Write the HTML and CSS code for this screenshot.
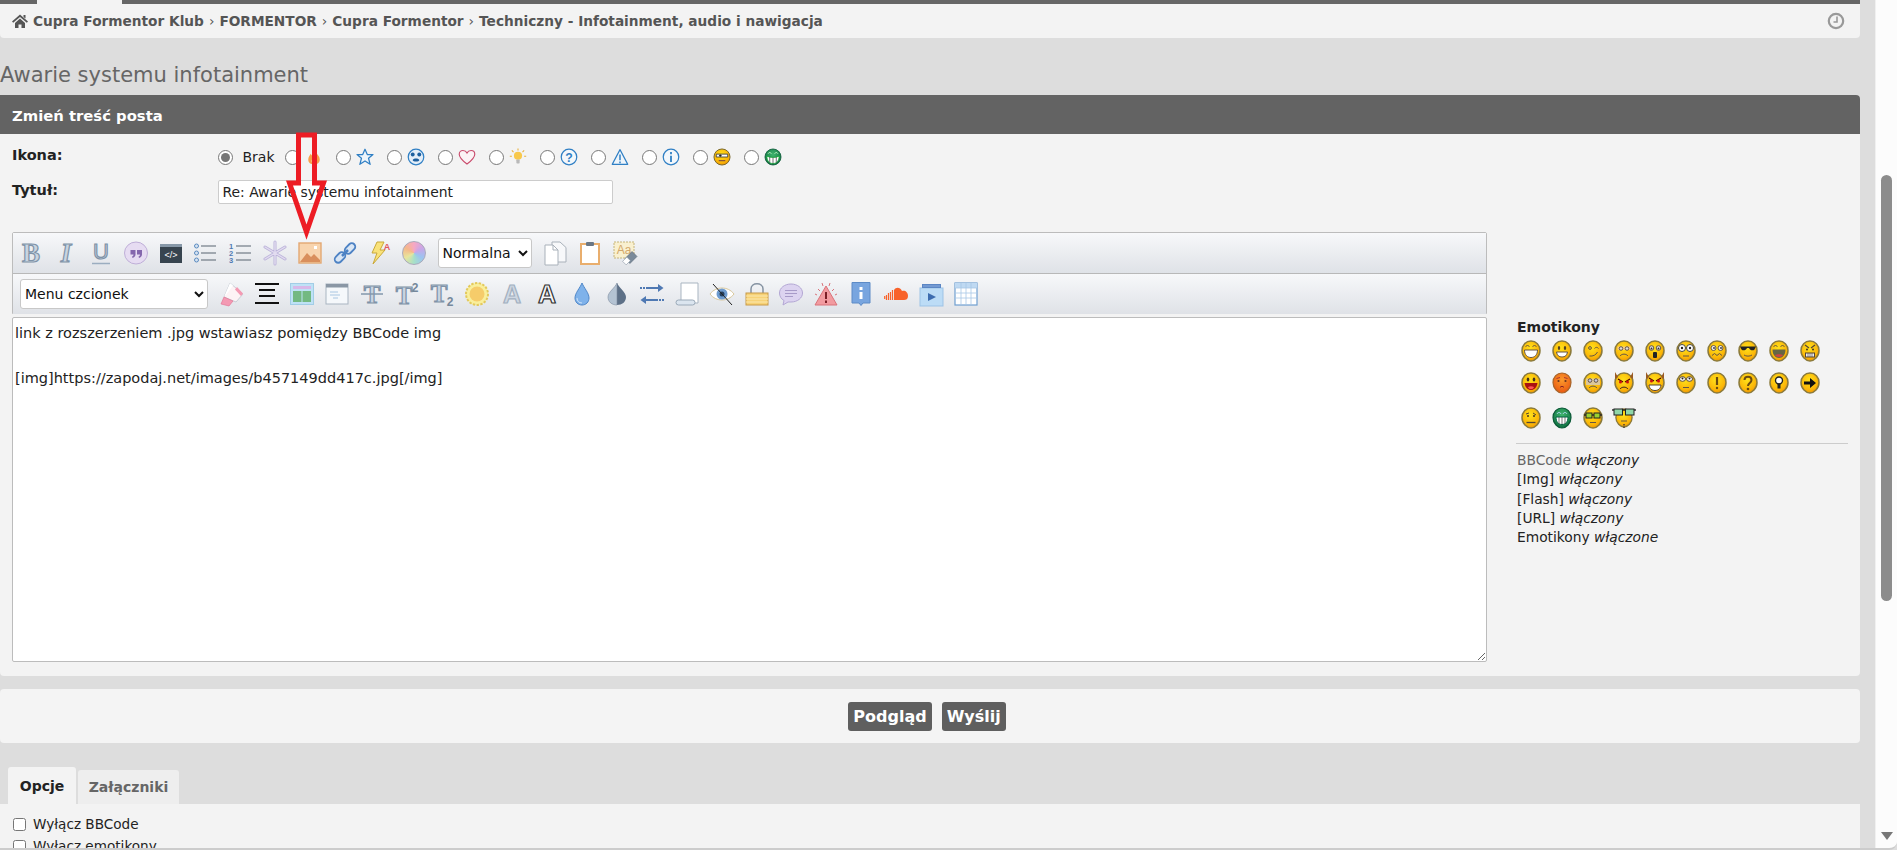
FILE: index.html
```html
<!DOCTYPE html>
<html lang="pl">
<head>
  <meta charset="UTF-8" />
  <title>Awarie systemu infotainment</title>
  <link rel="stylesheet" href="styles.css">
</head>
<body>
  <!-- shared gradients and smiley head -->
  <svg class="sprite" aria-hidden="true">
    <defs>
      <radialGradient id="gold" cx="45%" cy="35%" r="70%"><stop offset="0" stop-color="#ffe11a"/><stop offset="0.7" stop-color="#fbb507"/><stop offset="1" stop-color="#e98c05"/></radialGradient>
      <radialGradient id="red" cx="50%" cy="35%" r="70%"><stop offset="0" stop-color="#fb9a2c"/><stop offset="1" stop-color="#e8530f"/></radialGradient>
      <radialGradient id="green" cx="50%" cy="35%" r="70%"><stop offset="0" stop-color="#3fb56e"/><stop offset="1" stop-color="#0b6b3c"/></radialGradient>
      <symbol id="head" viewBox="0 0 20 22"><path d="M10 1C15 1 19 5 19 10.5C19 16.5 14 21 10 21C6 21 1 16.5 1 10.5C1 5 5 1 10 1Z" fill="url(#gold)" stroke="#8a7a3c" stroke-width="1.5"/></symbol>
      <symbol id="head-red" viewBox="0 0 20 22"><path d="M10 1C15 1 19 5 19 10.5C19 16.5 14 21 10 21C6 21 1 16.5 1 10.5C1 5 5 1 10 1Z" fill="url(#red)" stroke="#a8662c" stroke-width="1.2"/></symbol>
      <symbol id="head-green" viewBox="0 0 20 22"><path d="M10 1C15 1 19 5 19 10.5C19 16.5 14 21 10 21C6 21 1 16.5 1 10.5C1 5 5 1 10 1Z" fill="url(#green)" stroke="#0c5a38" stroke-width="1.2"/></symbol>
    </defs>
  </svg>

  <div class="page">
    <div class="content">
      <div class="topbar"><span class="topbar-tab"></span></div>

      <nav class="crumbs">
        <svg class="crumb-home" viewBox="0 0 16 14"><path d="M8 0.5L16 7.5L14.8 8.8L8 3L1.2 8.8L0 7.5Z M3 9L8 4.600L13 9V14H9.5V10.5H6.5V14H3Z M11.5 1H13.5V4.5L11.5 3Z" fill="#555"/></svg>
        <span>Cupra Formentor Klub</span><i>›</i><span>FORMENTOR</span><i>›</i><span>Cupra Formentor</span><i>›</i><span>Techniczny - Infotainment, audio i nawigacja</span>
        <svg class="crumb-clock" viewBox="0 0 18 18"><circle cx="9" cy="9" r="7.2" fill="none" stroke="#999" stroke-width="2.2"/><path d="M10 4.5V10H6.5" fill="none" stroke="#999" stroke-width="1.6"/></svg>
      </nav>

      <h1 class="thread-title">Awarie systemu infotainment</h1>

      <section class="panel">
        <h2 class="panel-head">Zmień treść posta</h2>

        <div class="row row-icons">
          <label class="row-label">Ikona:</label>
          <div class="post-icons">
            <label class="post-none"><input type="radio" name="ikona" checked /> <span>Brak</span></label>
            <label class="post-icon"><input type="radio" name="ikona" />
              <svg viewBox="0 0 22 22"><path d="M11 2C12 6 18 8 18 14C18 18 15 20 11 20C7 20 4 18 4 14C4 11 6 9 7 7C8 9 9 10 10 10C11 7 10 4 11 2Z" fill="#f6a04a"/><path d="M11 10C12 13 14 14 14 16C14 18 12.5 19 11 19C9.5 19 8 18 8 16C8 14 10 13 11 10Z" fill="#fde3b0"/></svg></label>
            <label class="post-icon"><input type="radio" name="ikona" />
              <svg viewBox="0 0 22 22"><path d="M11 1.5L13.8 8H20.8L15.3 12.5L17.3 20L11 15.8L4.7 20L6.7 12.5L1.2 8H8.2Z" fill="#eef5fb" stroke="#2f7fc4" stroke-width="1.5" stroke-linejoin="round"/></svg></label>
            <label class="post-icon"><input type="radio" name="ikona" />
              <svg viewBox="0 0 22 22"><circle cx="11" cy="11" r="9.5" fill="#e4eef8" stroke="#2f7fc4" stroke-width="1.5"/><circle cx="7" cy="8" r="2.4" fill="#1d5f9e"/><circle cx="15" cy="8" r="2.4" fill="#1d5f9e"/><path d="M7 15C7 12 15 12 15 15C15 17 7 17 7 15Z" fill="#1d5f9e"/></svg></label>
            <label class="post-icon"><input type="radio" name="ikona" />
              <svg viewBox="0 0 22 22"><path d="M11 19.5C5 15 1.5 11.5 1.5 7.5C1.5 4.5 3.8 3 6 3C8 3 10 4 11 6C12 4 14 3 16 3C18.2 3 20.5 4.5 20.5 7.5C20.5 11.5 17 15 11 19.5Z" fill="#fbf3f5" stroke="#c94b6c" stroke-width="1.4"/></svg></label>
            <label class="post-icon"><input type="radio" name="ikona" />
              <svg viewBox="0 0 22 22"><circle cx="11" cy="9.5" r="5" fill="#f8c84a"/><rect x="9" y="14" width="4" height="5" rx="1" fill="#b9b9b9"/><path d="M11 0.5V3M3.5 3L5.5 5M18.5 3L16.5 5M1 10H3.5M18.5 10H21" stroke="#e8b13a" stroke-width="1.3"/></svg></label>
            <label class="post-icon"><input type="radio" name="ikona" />
              <svg viewBox="0 0 22 22"><circle cx="11" cy="11" r="9.5" fill="#f3f7fb" stroke="#2f7fc4" stroke-width="1.5"/><text x="11" y="16.5" class="svg-q">?</text></svg></label>
            <label class="post-icon"><input type="radio" name="ikona" />
              <svg viewBox="0 0 22 22"><path d="M11 2L20.5 20H1.5Z" fill="#eef5fb" stroke="#2f7fc4" stroke-width="1.4" stroke-linejoin="round"/><path d="M11 8V15M11 16.5V18.5" stroke="#2f7fc4" stroke-width="1.8"/></svg></label>
            <label class="post-icon"><input type="radio" name="ikona" />
              <svg viewBox="0 0 22 22"><circle cx="11" cy="11" r="9.5" fill="#f3f7fb" stroke="#2f7fc4" stroke-width="1.5"/><path d="M11 5V7.5M11 9.5V17" stroke="#2f7fc4" stroke-width="2.2"/></svg></label>
            <label class="post-icon"><input type="radio" name="ikona" />
              <svg viewBox="0 0 22 22"><circle cx="11" cy="11" r="9.8" fill="url(#gold)" stroke="#77662c" stroke-width="1.2"/><path d="M4 7.5H18V11H4Z" fill="#fff" stroke="#333"/><circle cx="9" cy="9.3" r="1.5" fill="#222"/><path d="M7 15.5H15" stroke="#744" stroke-width="1.3"/></svg></label>
            <label class="post-icon"><input type="radio" name="ikona" />
              <svg viewBox="0 0 22 22"><circle cx="11" cy="11" r="9.8" fill="url(#green)" stroke="#0c5a38"/><path d="M3.5 10C8 12 14 12 18.5 10C18.5 16 15 19 11 19C7 19 3.5 16 3.5 10Z" fill="#fff" stroke="#1a3"/><path d="M7 11V18M11 11.5V19M15 11V18" stroke="#555"/><path d="M5 7C6 5 8 5 9 7M13 7C14 5 16 5 17 7" fill="none" stroke="#cfc"/></svg></label>
          </div>
        </div>

        <div class="row row-title">
          <label class="row-label" for="tytul">Tytuł:</label>
          <input type="text" id="tytul" class="title-input" value="Re: Awarie systemu infotainment" />
        </div>

        <div class="edit-area">
          <div class="editor">
            <div class="toolbar">
              <div class="tool-row tool-row-1">
                <span class="tool"><svg viewBox="0 0 24 24"><text x="12" y="21" class="lt">B</text></svg></span>
                <span class="tool"><svg viewBox="0 0 24 24"><text x="12" y="21" class="lt lt-i">I</text></svg></span>
                <span class="tool"><svg viewBox="0 0 24 24"><text x="12" y="18" class="lt lt-u">U</text><path d="M3 22.5H21" stroke="#9badc0" stroke-width="1.5"/></svg></span>
                <span class="tool"><svg viewBox="0 0 24 24"><ellipse cx="12" cy="12" rx="11.5" ry="11" fill="#e6dcf2" stroke="#bfafd8"/><path d="M6.5 9H11.5V13.5C11.5 15.5 10 16.5 8.5 17L8 15.5C9 15.2 9.5 14.5 9.5 13.5H6.5Z M13 9H18V13.5C18 15.5 16.5 16.5 15 17L14.5 15.5C15.5 15.2 16 14.5 16 13.5H13Z" fill="#8467ad"/></svg></span>
                <span class="tool"><svg viewBox="0 0 24 24"><rect x="1" y="3" width="22" height="19" fill="#37444f"/><rect x="1" y="3" width="22" height="3" fill="#8798a8"/><text x="12" y="17" class="svg-code">&lt;/&gt;</text></svg></span>
                <span class="tool"><svg viewBox="0 0 24 24"><circle cx="3.5" cy="5" r="2" fill="#d5e2f0" stroke="#5b8bc0"/><circle cx="3.5" cy="12" r="2" fill="#d5e2f0" stroke="#5b8bc0"/><circle cx="3.5" cy="19" r="2" fill="#d5e2f0" stroke="#5b8bc0"/><path d="M8 5H23M8 12H23M8 19H23" stroke="#596470" stroke-width="1.2"/></svg></span>
                <span class="tool"><svg viewBox="0 0 24 24"><text x="3" y="8" class="svg-num">1</text><text x="3" y="15" class="svg-num">2</text><text x="3" y="22" class="svg-num">3</text><path d="M8 5H23M8 12H23M8 19H23" stroke="#596470" stroke-width="1.2"/></svg></span>
                <span class="tool"><svg viewBox="0 0 24 24"><path d="M12 1V23M2 6L22 18M2 18L22 6" stroke="#bcb4da" stroke-width="3" stroke-linecap="round"/><path d="M12 1V23M2 6L22 18M2 18L22 6" stroke="#e2dcf0" stroke-width="1.4" stroke-linecap="round"/></svg></span>
                <span class="tool"><svg viewBox="0 0 24 24"><rect x="1" y="2" width="22" height="20" fill="#f8d4ae" stroke="#e3a873" stroke-width="1.4"/><path d="M2 21L9 12L13 16L16 13L22 19V21Z" fill="#d98f5d"/><rect x="16" y="5" width="3" height="3" fill="#fff"/></svg></span>
                <span class="tool"><svg viewBox="0 0 24 24"><g fill="#d9e6f5" stroke="#4d82c4" stroke-width="1.8"><rect x="1" y="13" width="12" height="7" rx="3.5" transform="rotate(-45 7 16.5)"/><rect x="11" y="4" width="12" height="7" rx="3.5" transform="rotate(-45 17 7.5)"/></g><path d="M9 15L15 9" stroke="#4d82c4" stroke-width="2.5"/></svg></span>
                <span class="tool"><svg viewBox="0 0 24 24"><path d="M10 1H17L13 9H18L6 23L10 12H5Z" fill="#f9e27a" stroke="#c9a83a"/><text x="20" y="9" class="svg-a">A</text></svg></span>
                <span class="tool"><span class="wheel"></span></span>
                <select class="tool-select sel-size"><option>Normalna</option></select>
                <span class="tool"><svg viewBox="0 0 24 24"><path d="M9 1H17L23 6.5V21H9Z" fill="#f7f8fa" stroke="#a9b1ba"/><path d="M2 4H10L15 9V24H2Z" fill="#fff" stroke="#a9b1ba"/><path d="M10 4V9H15" fill="none" stroke="#a9b1ba"/></svg></span>
                <span class="tool"><svg viewBox="0 0 24 24"><rect x="3" y="3" width="18" height="20" fill="#fff" stroke="#e9ae6d" stroke-width="2"/><rect x="8" y="1" width="8" height="4" rx="1" fill="#6a7785"/></svg></span>
                <span class="tool"><svg viewBox="0 0 24 24"><rect x="1" y="1" width="20" height="16" fill="#f9f0cf" stroke="#c5b47a" stroke-dasharray="2 1"/><text x="11" y="13" class="svg-aa">Aa</text><rect x="13" y="13" width="10" height="7" transform="rotate(-45 18 16.5)" fill="#7a8a9a" stroke="#5d6c7a" stroke-width="0.6"/><rect x="11" y="17" width="5" height="6" transform="rotate(45 13.5 20)" fill="#fff" stroke="#8a97a5" stroke-width="0.6"/></svg></span>
              </div>
              <div class="tool-row tool-row-2">
                <select class="tool-select sel-font"><option>Menu czcionek</option></select>
                <span class="tool"><svg viewBox="0 0 24 24"><path d="M10 1L23 12L16 20L4 15Z" fill="#fdf3f5" stroke="#c8ced6"/><path d="M10 1L13 3.5L6 13L4 15Z" fill="#fff"/><path d="M1 22L4 15L13 19L9 24Z" fill="#f49ab3" stroke="#e06d8e" stroke-width="0.6"/><path d="M17 5L23 11.5L21 14L15 7.5Z" fill="#f49ab3"/></svg></span>
                <span class="tool"><svg viewBox="0 0 24 24"><path d="M0 2H24M4 8H20M4 14H20M0 21H24" stroke="#111" stroke-width="2.2"/></svg></span>
                <span class="tool"><svg viewBox="0 0 24 24"><rect x="0.5" y="1.5" width="23" height="21" fill="#bfe2f6" stroke="#a2cde6"/><rect x="3" y="4" width="18" height="3" fill="#d8b8e8"/><rect x="3" y="9" width="8.5" height="11" fill="#73b982"/><rect x="12.5" y="9" width="8.5" height="11" fill="#73b982"/></svg></span>
                <span class="tool"><svg viewBox="0 0 24 24"><rect x="1" y="2" width="22" height="20" fill="#f5f8fb" stroke="#a9b5c1"/><rect x="1" y="2" width="22" height="3.5" fill="#8a97a5"/><path d="M5 10H13M5 13H15M8 16H13" stroke="#a8c6e2"/></svg></span>
                <span class="tool"><svg viewBox="0 0 24 24"><text x="12" y="21" class="lt lt-t">T</text><path d="M1 12H23" stroke="#8397ab" stroke-width="1.5"/></svg></span>
                <span class="tool"><svg viewBox="0 0 24 24"><text x="9" y="22" class="lt lt-t">T</text><text x="20" y="10" class="svg-sup">2</text></svg></span>
                <span class="tool"><svg viewBox="0 0 24 24"><text x="9" y="20" class="lt lt-t">T</text><text x="20" y="24" class="svg-sup">2</text></svg></span>
                <span class="tool"><svg viewBox="0 0 24 24"><circle cx="12" cy="12" r="11" fill="#f9ef9c" stroke="#e3c95c" stroke-dasharray="2.4 1.4" stroke-width="2"/><circle cx="12" cy="12" r="7.5" fill="#f6cc6a"/></svg></span>
                <span class="tool"><svg viewBox="0 0 24 24"><text x="12" y="21" class="lt lt-a">A</text></svg></span>
                <span class="tool"><svg viewBox="0 0 24 24"><text x="12" y="21" class="lt lt-b">A</text></svg></span>
                <span class="tool"><svg viewBox="0 0 24 24"><path d="M12 1C14 6 19 11 19 16C19 20 16 23 12 23C8 23 5 20 5 16C5 11 10 6 12 1Z" fill="#7fb2ea" stroke="#4e86c8"/><path d="M7 16C7 19 9 21 12 21" stroke="#cfe3f8" fill="none"/></svg></span>
                <span class="tool"><svg viewBox="0 0 24 24"><path d="M12 1C14 6 21 10 21 15C21 20 17 23 12 23Z" fill="#5d7087"/><path d="M12 1C10 6 3 10 3 15C3 20 7 23 12 23Z" fill="#b4c3d3" stroke="#7c8c9d" stroke-width="0.6"/></svg></span>
                <span class="tool"><svg viewBox="0 0 24 24"><path d="M0 6H2M3 6H5M6 6H19" stroke="#4f79b3" stroke-width="2" /><path d="M18 2L23.5 6L18 10Z" fill="#4f79b3"/><path d="M24 18H22M21 18H19M18 18H5" stroke="#4f79b3" stroke-width="2"/><path d="M6 14L0.5 18L6 22Z" fill="#4f79b3"/></svg></span>
                <span class="tool"><svg viewBox="0 0 24 24"><path d="M6 1H23V21H6Z" fill="#fff" stroke="#a9b5c1"/><rect x="1" y="18" width="19" height="5" rx="2.5" fill="#dbe5ef" stroke="#9aa9b8"/></svg></span>
                <span class="tool"><svg viewBox="0 0 24 24"><path d="M0 12C6 4 18 4 24 12C18 20 6 20 0 12Z" fill="#fff" stroke="#d9c79a"/><circle cx="12" cy="12" r="5.5" fill="#6f9ccf"/><circle cx="12" cy="12" r="2.5" fill="#26405f"/><path d="M3 2L22 23" stroke="#222"/></svg></span>
                <span class="tool"><svg viewBox="0 0 24 24"><path d="M6 12V7C6 0 18 0 18 7V12" fill="none" stroke="#8592a1" stroke-width="1.5"/><rect x="1" y="11" width="22" height="12" fill="#f7d276" stroke="#c89a48"/><path d="M1 14H23M1 17H23M1 20H23" stroke="#fbe8b0"/></svg></span>
                <span class="tool"><svg viewBox="0 0 24 24"><path d="M12 2C18.5 2 23.5 6 23.5 11C23.5 16 18.5 20 12 20H9L4 23L5 18.5C2 17 0.5 14 0.5 11C0.5 6 5.5 2 12 2Z" fill="#dcd3f0" stroke="#b3a7d4"/><path d="M6 8.5H18M6 11.5H18M6 14.5H14" stroke="#a79ac8"/></svg></span>
                <span class="tool"><svg viewBox="0 0 24 24"><path d="M12 4L23 23H1Z" fill="#f29ba0" stroke="#d9737a"/><path d="M12 10V17M12 18.5V21" stroke="#7a1f26" stroke-width="2"/><path d="M4 7L6 9M20 7L18 9M16 1L15 4M8 1L9 4M1 12L3 13M23 12L21 13" stroke="#d9737a"/></svg></span>
                <span class="tool"><svg viewBox="0 0 24 24"><path d="M3 0.5H21V21H14L12 23.5L10 21H3Z" fill="#78a5df" stroke="#5c8ac6"/><path d="M12 5V8M12 10V17" stroke="#fff" stroke-width="3"/></svg></span>
                <span class="tool"><svg viewBox="0 0 24 24"><path d="M10 18V8C12 5 16 5 18 9C21 8 24 10 24 14C24 17 22 18 20 18Z" fill="#f8622a"/><path d="M8.5 18V8M6.5 18V10M4.5 18V11M2.5 18V13M0.7 17V14" stroke="#f8622a" stroke-width="1.2"/></svg></span>
                <span class="tool"><svg viewBox="0 0 24 24"><rect x="1" y="6" width="23" height="18" fill="#bcdcf6" stroke="#9dc3e6"/><path d="M3 2H22V6H3Z" fill="#5b86c4"/><path d="M4 4H21" stroke="#8cade0"/><path d="M9 11L17 15L9 19Z" fill="#3d6caf"/></svg></span>
                <span class="tool"><svg viewBox="0 0 24 24"><rect x="1" y="1" width="22" height="22" fill="#fff" stroke="#6f9fd0" stroke-width="1.2"/><rect x="1" y="1" width="22" height="5" fill="#bfd9f2"/><path d="M1 6H23M1 11H23M1 16H23M7 1V23M12 1V23M17 1V23" stroke="#a7c6e6" stroke-width="0.8"/></svg></span>
              </div>
            </div>
            <textarea class="message">link z rozszerzeniem .jpg wstawiasz pomiędzy BBCode img

[img]https://zapodaj.net/images/b457149dd417c.jpg[/img]</textarea>
          </div>

          <aside class="side">
            <h3 class="side-title">Emotikony</h3>
            <div class="smileys">
              <svg viewBox="0 0 20 22"><use href="#head"/><path d="M3.5 10H16.5C16.5 15 13.5 17.5 10 17.5C6.5 17.5 3.5 15 3.5 10Z" fill="#fff" stroke="#654"/><path d="M4.5 7C5.5 5 7.5 5 8.5 7M11.5 7C12.5 5 14.5 5 15.5 7" fill="none" stroke="#654"/></svg>
              <svg viewBox="0 0 20 22"><use href="#head"/><ellipse cx="7" cy="8" rx="1.2" ry="2" fill="#542"/><ellipse cx="13" cy="8" rx="1.2" ry="2" fill="#542"/><path d="M4.5 12H15.5C15 15.5 13 17 10 17C7 17 5 15.5 4.5 12Z" fill="#fff" stroke="#654"/></svg>
              <svg viewBox="0 0 20 22"><use href="#head"/><circle cx="7" cy="8" r="1.4" fill="none" stroke="#654"/><path d="M11.5 8.5C12.5 7 14.5 7 15.5 8.5" fill="none" stroke="#654"/><path d="M6.5 16C10 16.5 13 15 14.5 12" fill="none" stroke="#654"/></svg>
              <svg viewBox="0 0 20 22"><use href="#head"/><path d="M3.5 6.5H16.5V10H3.5Z" fill="#f3c98a"/><circle cx="7" cy="8.5" r="1.8" fill="#ddd" stroke="#654"/><circle cx="13" cy="8.5" r="1.8" fill="#ddd" stroke="#654"/><path d="M6 16C8 13.5 12 13.5 14 16" fill="none" stroke="#654"/></svg>
              <svg viewBox="0 0 20 22"><use href="#head"/><circle cx="6.5" cy="8" r="2.3" fill="#ddd" stroke="#654"/><circle cx="13.5" cy="8" r="2.3" fill="#ddd" stroke="#654"/><circle cx="6.5" cy="8.5" r="0.9" fill="#333"/><circle cx="13.5" cy="8.5" r="0.9" fill="#333"/><rect x="8" y="12" width="4" height="6" rx="1" fill="#222"/></svg>
              <svg viewBox="0 0 20 22"><use href="#head"/><circle cx="6" cy="8" r="3.5" fill="#fff" stroke="#444"/><circle cx="14" cy="8" r="3.5" fill="#fff" stroke="#444"/><circle cx="6" cy="8" r="1.2" fill="#222"/><circle cx="14" cy="8" r="1.2" fill="#222"/><path d="M7 16H13" stroke="#654"/></svg>
              <svg viewBox="0 0 20 22"><use href="#head"/><circle cx="6.5" cy="8" r="2.5" fill="#eee" stroke="#654"/><circle cx="13.5" cy="8" r="2.5" fill="#eee" stroke="#654"/><circle cx="7" cy="8" r="0.9" fill="#333"/><circle cx="14" cy="8" r="0.9" fill="#333"/><path d="M5 15.5L7.5 13.5L10 15.5L12.5 13.5L15 15.5" fill="none" stroke="#654"/></svg>
              <svg viewBox="0 0 20 22"><use href="#head"/><path d="M2 6.5H18L16.5 9.5C15 11 12 10.5 11 8H9C8 10.5 5 11 3.5 9.5Z" fill="#222"/><path d="M6 15C8 16.5 12 16.5 14 15" fill="none" stroke="#654"/></svg>
              <svg viewBox="0 0 20 22"><use href="#head"/><path d="M4.5 7C5.5 5 7.5 5 8.5 7M11.5 7C12.5 5 14.5 5 15.5 7" fill="none" stroke="#654"/><path d="M3.5 9.5H16.5C16.5 15 13.5 18 10 18C6.5 18 3.5 15 3.5 9.5Z" fill="#664" /><path d="M6 15C8 14 12 14 14 15C13 17.5 7 17.5 6 15Z" fill="#c44"/></svg>
              <svg viewBox="0 0 20 22"><use href="#head"/><path d="M5 5L9 8M15 5L11 8" stroke="#543" stroke-width="1.2"/><circle cx="7" cy="9.5" r="1" fill="#432"/><circle cx="13" cy="9.5" r="1" fill="#432"/><rect x="5.5" y="13" width="9" height="4" fill="#eee" stroke="#543"/><path d="M8 13V17M10 13V17M12 13V17" stroke="#543" stroke-width="0.6"/></svg>

              <svg viewBox="0 0 20 22"><use href="#head"/><ellipse cx="7" cy="7.5" rx="1.3" ry="2" fill="#432"/><ellipse cx="13" cy="7.5" rx="1.3" ry="2" fill="#432"/><path d="M3.5 11H16.5C16 15.5 13 18 10 18C7 18 4 15.5 3.5 11Z" fill="#a11"/><path d="M7 15C9 14 11 14 13 15C12 18 8 18 7 15Z" fill="#f55"/></svg>
              <svg viewBox="0 0 20 22"><use href="#head-red"/><circle cx="6.5" cy="9" r="1.1" fill="#632"/><circle cx="13.5" cy="9" r="1.1" fill="#632"/><path d="M4.5 6.5L8 5.5M15.5 6.5L12 5.5" stroke="#a33" /><path d="M8 15.5C9 14 11 14 12 15.5" fill="none" stroke="#822"/></svg>
              <svg viewBox="0 0 20 22"><use href="#head"/><path d="M3 6.5H17V13H3Z" fill="#dcc79a"/><circle cx="7" cy="8.5" r="1.8" fill="#ccd" stroke="#654"/><circle cx="13" cy="8.5" r="1.8" fill="#ccd" stroke="#654"/><path d="M6 16C8 13.5 12 13.5 14 16" fill="none" stroke="#654"/></svg>
              <svg viewBox="0 0 20 22"><use href="#head"/><path d="M1 0L4 5L1 7ZM19 0L16 5L19 7Z" fill="#9a5a22"/><path d="M4 7L9 10M16 7L11 10" stroke="#400" stroke-width="1.2"/><circle cx="6.5" cy="10" r="1.5" fill="#c11"/><circle cx="13.5" cy="10" r="1.5" fill="#c11"/><path d="M6 17C8 14.5 12 14.5 14 17" fill="none" stroke="#422"/></svg>
              <svg viewBox="0 0 20 22"><use href="#head"/><path d="M1 0L4 5L1 7ZM19 0L16 5L19 7Z" fill="#9a5a22"/><path d="M4 6L9 9M16 6L11 9" stroke="#400" stroke-width="1.2"/><circle cx="6.5" cy="9" r="1.5" fill="#c11"/><circle cx="13.5" cy="9" r="1.5" fill="#c11"/><path d="M4 13H16C15.5 17 13 18.5 10 18.5C7 18.5 4.5 17 4 13Z" fill="#fff" stroke="#543"/></svg>
              <svg viewBox="0 0 20 22"><use href="#head"/><ellipse cx="6.5" cy="7" rx="3" ry="2.3" fill="#fff" stroke="#543"/><ellipse cx="13.5" cy="7" rx="3" ry="2.3" fill="#fff" stroke="#543"/><circle cx="6.5" cy="6.5" r="1" fill="#222"/><circle cx="13.5" cy="6.5" r="1" fill="#222"/><path d="M7 15.5H13" stroke="#654"/></svg>
              <svg viewBox="0 0 20 22"><use href="#head"/><path d="M10 5V13" stroke="#6a4a10" stroke-width="2.2"/><circle cx="10" cy="16" r="1.2" fill="#6a4a10"/></svg>
              <svg viewBox="0 0 20 22"><use href="#head"/><path d="M6.5 8C6.5 3.5 13.5 3.5 13.5 8C13.5 11 10 11 10 14" fill="none" stroke="#6a4a10" stroke-width="2"/><circle cx="10" cy="17" r="1.3" fill="#6a4a10"/></svg>
              <svg viewBox="0 0 20 22"><use href="#head"/><circle cx="10" cy="8.5" r="3.5" fill="#fff" stroke="#222" stroke-width="1.4"/><rect x="8.5" y="11.5" width="3" height="5" fill="#222"/></svg>
              <svg viewBox="0 0 20 22"><use href="#head"/><path d="M4 9.5H10V6L16 11L10 16V12.5H4Z" fill="#111"/></svg>

              <svg viewBox="0 0 20 22"><use href="#head"/><path d="M5 7L8 6M12 6L15 8" stroke="#543"/><circle cx="7" cy="9" r="1" fill="#432"/><circle cx="13" cy="9" r="1" fill="#432"/><path d="M5.5 15.5H14.5" stroke="#543" stroke-width="1.3"/></svg>
              <svg viewBox="0 0 20 22"><use href="#head-green"/><path d="M4 10H16C16 15 13.5 17.5 10 17.5C6.5 17.5 4 15 4 10Z" fill="#fff" stroke="#064"/><path d="M7 10V17M10 10V17.5M13 10V17" stroke="#444" stroke-width="0.7"/><path d="M5 7C6 5 8 5 9 7M11 7C12 5 14 5 15 7" fill="none" stroke="#bdf"/></svg>
              <svg viewBox="0 0 20 22"><use href="#head"/><path d="M1 8H19" stroke="#222" stroke-width="1.4"/><rect x="3" y="6" width="6" height="5" fill="#9bd12f" stroke="#222"/><rect x="11" y="6" width="6" height="5" fill="#9bd12f" stroke="#222"/><path d="M7 15.5H13" stroke="#654"/></svg>
              <svg class="smiley-wide" viewBox="0 0 24 26"><use href="#head" x="3" y="2" width="18" height="22"/><path d="M0 5H24" stroke="#222" stroke-width="1.4"/><rect x="2" y="4" width="8.5" height="6" fill="#8fd6a8" stroke="#222"/><rect x="13.5" y="4" width="8.5" height="6" fill="#8fd6a8" stroke="#222"/><path d="M9 16H15" stroke="#654"/><path d="M12 19V24" stroke="#543" stroke-width="1.6" stroke-dasharray="1.5 1"/></svg>
            </div>
            <div class="side-rules">
              <div><a class="rule-link">BBCode</a> <em>włączony</em></div>
              <div>[Img] <em>włączony</em></div>
              <div>[Flash] <em>włączony</em></div>
              <div>[URL] <em>włączony</em></div>
              <div>Emotikony <em>włączone</em></div>
            </div>
          </aside>
        </div>
      </section>

      <section class="panel-buttons">
        <button class="btn">Podgląd</button>
        <button class="btn">Wyślij</button>
      </section>

      <div class="tabs">
        <span class="tab tab-on">Opcje</span>
        <span class="tab">Załączniki</span>
      </div>
      <section class="options">
        <label class="opt"><input type="checkbox" /> Wyłącz BBCode</label>
        <label class="opt"><input type="checkbox" /> Wyłącz emotikony</label>
      </section>
    </div>

    <div class="scrollbar">
      <span class="scroll-thumb"></span>
      <span class="scroll-down"></span>
    </div>

    <!-- red arrow pasted over the screenshot -->
    <svg class="red-arrow" viewBox="0 0 44 108"><path d="M13.5 3H29.5V51H38.5L21.5 100L4.5 51H13.5Z" fill="none" stroke="#ed1c24" stroke-width="5"/></svg>
  </div>
</body>
</html>
```

FILE: styles.css
```css
* {
  box-sizing: border-box;
}

body {
  margin: 0;
  height: 850px;
  overflow: hidden;
  background-color: #dddddd;
  color: #222;
  font-family: "DejaVu Sans", Verdana, sans-serif;
  font-size: 13px;
}

.sprite {
  position: absolute;
  width: 0;
  height: 0;
}

.page {
  position: relative;
  display: flex;
  height: 850px;
  overflow: hidden;
  border-bottom: 2px solid #ccc;
  border-bottom-right-radius: 8px;
}

.content {
  flex: 1;
  min-width: 0;
  padding-right: 15px;
}

/* top strip and breadcrumb */
.topbar {
  height: 4px;
  padding-left: 37px;
  background-color: #666;
}

.topbar-tab {
  display: block;
  width: 85px;
  height: 4px;
  background-color: #f3f3f3;
}

.crumbs {
  display: flex;
  align-items: center;
  height: 34px;
  padding: 0 15px 0 12px;
  background-color: #f3f3f3;
  border-radius: 0 0 4px 4px;
  color: #555;
  font-size: 13.7px;
  font-weight: bold;
}

.crumbs i {
  margin: 0 5px;
  font-style: normal;
  font-weight: normal;
}

.crumb-home {
  width: 16px;
  height: 14px;
  margin-right: 5px;
}

.crumb-clock {
  width: 18px;
  height: 18px;
  margin-left: auto;
}

.thread-title {
  display: flex;
  align-items: center;
  height: 57px;
  margin: 0;
  padding-top: 16px;
  color: #666;
  font-size: 21px;
  font-weight: normal;
}

/* main panel */
.panel {
  height: 581px;
  background-color: #f3f3f3;
  border-radius: 0 4px 4px 4px;
}

.panel-head {
  display: flex;
  align-items: center;
  height: 39px;
  margin: 0;
  padding: 2px 0 0 12px;
  background-color: #636363;
  border-radius: 0 4px 0 0;
  color: #fff;
  font-size: 14.8px;
  font-weight: bold;
}

.row {
  display: flex;
  padding-left: 12px;
}

.row-label {
  width: 205.5px;
  font-size: 14.5px;
  font-weight: bold;
}

.row-icons {
  align-items: center;
  height: 46px;
}

.row-icons .row-label {
  padding-bottom: 4px;
}

.row-title {
  height: 52px;
}

.row-title .row-label {
  padding-top: 2px;
}

.post-icons {
  display: flex;
  align-items: center;
  font-size: 14px;
}

.post-icons input {
  width: 15px;
  height: 15px;
  margin: 0;
  accent-color: #767676;
}

.post-none {
  display: flex;
  align-items: center;
  gap: 10px;
  width: 67px;
}

.post-icon {
  display: flex;
  align-items: center;
  width: 51px;
}

.post-icon svg {
  width: 18px;
  height: 18px;
  margin-left: 5.5px;
}

.title-input {
  width: 395px;
  height: 24px;
  padding: 0 4px;
  background-color: #fff;
  border: 1px solid #ccc;
  border-radius: 2px;
  color: #222;
  font-family: inherit;
  font-size: 13.9px;
}

/* editor */
.edit-area {
  display: flex;
  padding-left: 12px;
}

.editor {
  width: 1475px;
}

.toolbar {
  height: 82px;
  background: linear-gradient(#f6f7f9, #dfe2e7);
  border: 1px solid #bcbcbc;
  border-radius: 2px 2px 0 0;
}

.tool-row {
  display: flex;
  align-items: center;
  height: 40.5px;
  background: linear-gradient(#f7f8fa, #dfe2e7);
}

.tool-row-1 {
  padding-left: 1px;
  border-bottom: 1px solid #b8b8b8;
}

.tool-row-2 {
  padding-left: 7px;
}

.tool {
  display: flex;
  align-items: center;
  justify-content: center;
  flex: none;
  width: 34.8px;
}

.tool-row-2 .tool {
  width: 34.95px;
}

.tool svg {
  width: 24px;
  height: 24px;
  overflow: visible;
}

.wheel {
  width: 24px;
  height: 24px;
  background: conic-gradient(#f7a8c4, #c9a6e8, #9cc4f0, #a6e0c8, #e8e59c, #f5b88a, #f7a8c4);
  border: 1px solid #aab;
  border-radius: 50%;
}

.tool-select {
  flex: none;
  height: 30px;
  background-color: #fff;
  border: 1px solid #c8c8c8;
  border-radius: 3px;
  color: #111;
  font-family: "DejaVu Sans", Verdana, sans-serif;
  font-size: 14px;
}

.sel-size {
  width: 94px;
  margin: 0 6px;
}

.sel-font {
  width: 188px;
  margin-right: 7px;
}

.lt {
  fill: #c9d5e1;
  stroke: #7f93a8;
  stroke-width: 1.2;
  font-family: "Liberation Serif", serif;
  font-size: 27px;
  font-weight: bold;
  text-anchor: middle;
}

.lt-i {
  font-style: italic;
}

.lt-u {
  font-family: "Liberation Sans", sans-serif;
  font-size: 22px;
  font-weight: normal;
}

.lt-t {
  font-size: 25px;
}

.lt-a {
  fill: #ced7e2;
  stroke: #a2b0c0;
  font-family: "Liberation Sans", sans-serif;
  font-size: 25px;
}

.lt-b {
  fill: #f7f8fa;
  stroke: #333;
  font-family: "Liberation Sans", sans-serif;
  font-size: 25px;
}

.svg-q {
  fill: #2f7fc4;
  font-family: "Liberation Sans", sans-serif;
  font-size: 15px;
  font-weight: bold;
  text-anchor: middle;
}

.svg-code {
  fill: #fff;
  font-family: "Liberation Sans", sans-serif;
  font-size: 9px;
  text-anchor: middle;
}

.svg-num {
  fill: #4f79b3;
  font-family: "Liberation Sans", sans-serif;
  font-size: 7.5px;
  font-weight: bold;
  text-anchor: middle;
}

.svg-a {
  fill: #e2575a;
  font-family: "Liberation Sans", sans-serif;
  font-size: 9px;
  font-weight: bold;
  text-anchor: middle;
}

.svg-aa {
  fill: #d3a86a;
  font-family: "Liberation Sans", sans-serif;
  font-size: 12px;
  text-anchor: middle;
}

.svg-sup {
  fill: #76889b;
  font-family: "Liberation Sans", sans-serif;
  font-size: 12px;
  font-weight: bold;
  text-anchor: middle;
}

.message {
  display: block;
  width: 100%;
  height: 345px;
  margin-top: 3px;
  padding: 4px 2px;
  background-color: #fff;
  border: 1px solid #bcbcbc;
  border-radius: 2px;
  color: #222;
  font-family: inherit;
  font-size: 14.5px;
  line-height: 22.5px;
}

/* side column */
.side {
  width: 331px;
  margin-left: 30px;
  padding-top: 87px;
}

.side-title {
  margin: 0;
  font-size: 14px;
  line-height: 16px;
}

.smileys {
  display: grid;
  grid-template-columns: repeat(10, 31px);
  grid-template-rows: 32px 35px 36px;
  align-items: start;
  justify-items: center;
  width: 332.5px;
  margin-left: -1.5px;
  padding-top: 5px;
  border-bottom: 1px solid #ccc;
}

.smileys svg {
  width: 20px;
  height: 22px;
}

.smileys .smiley-wide {
  width: 24px;
  height: 26px;
  margin-top: -2px;
}

.side-rules {
  padding-top: 7px;
  font-size: 13.8px;
  line-height: 19.3px;
}

.rule-link {
  color: #666;
}

/* buttons panel */
.panel-buttons {
  display: flex;
  align-items: center;
  justify-content: center;
  gap: 10px;
  height: 54px;
  margin-top: 13px;
  padding-right: 6px;
  background-color: #f4f4f4;
  border-radius: 4px;
}

.btn {
  height: 29px;
  padding: 0 5px;
  background-color: #5f5f5f;
  border: none;
  border-radius: 3px;
  color: #fff;
  font-family: inherit;
  font-size: 16px;
  font-weight: bold;
}

/* tabs */
.tabs {
  display: flex;
  align-items: flex-end;
  gap: 2px;
  height: 61px;
  padding-left: 8px;
}

.tab {
  display: flex;
  align-items: center;
  justify-content: center;
  width: 101px;
  height: 34px;
  background-color: #eee;
  border-radius: 3px 3px 0 0;
  color: #666;
  font-size: 14px;
  font-weight: bold;
}

.tab-on {
  width: 68px;
  height: 37px;
  background-color: #f3f3f3;
  color: #222;
}

.options {
  height: 60px;
  padding: 9px 0 0 13px;
  background-color: #f3f3f3;
}

.opt {
  display: flex;
  align-items: center;
  gap: 7px;
  height: 22px;
  font-size: 13.6px;
}

.opt input {
  width: 13px;
  height: 13px;
  margin: 0;
}

/* scrollbar */
.scrollbar {
  display: flex;
  flex: none;
  flex-direction: column;
  align-items: center;
  width: 22px;
  padding-top: 175px;
  background-color: #fcfcfc;
  border-left: 1px solid #f0f0f0;
}

.scroll-thumb {
  width: 11px;
  height: 426px;
  background-color: #8c8c8c;
  border-radius: 5.5px;
}

.scroll-down {
  width: 0;
  height: 0;
  margin-top: auto;
  margin-bottom: 8px;
  border-top: 8px solid #777;
  border-left: 6px solid transparent;
  border-right: 6px solid transparent;
}

.red-arrow {
  position: absolute;
  left: 285px;
  top: 132px;
  width: 44px;
  height: 108px;
}
```
